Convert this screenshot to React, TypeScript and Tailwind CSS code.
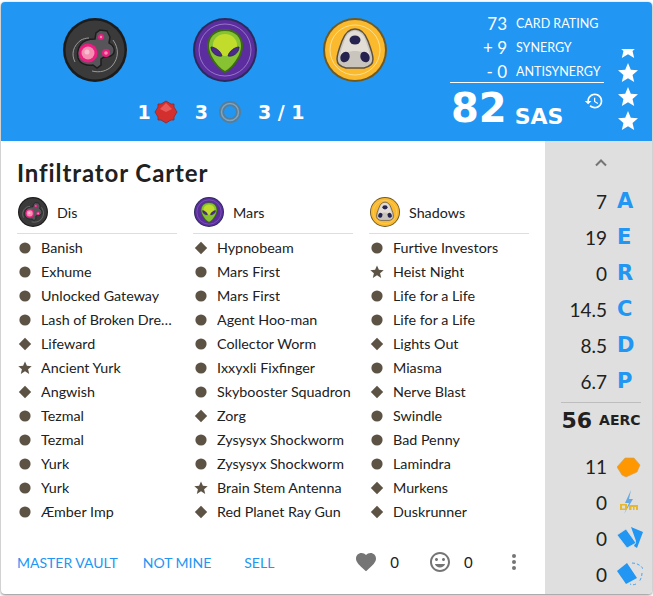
import React from 'react';

const display = 'font-["DejaVu_Sans",sans-serif] font-bold';

const decks = [
  {
    name: 'Dis',
    icon: 'dis',
    cards: [
      ['Banish', 'c'], ['Exhume', 'c'], ['Unlocked Gateway', 'c'], ['Lash of Broken Dreams', 'c'],
      ['Lifeward', 'd'], ['Ancient Yurk', 's'], ['Angwish', 'd'], ['Tezmal', 'c'],
      ['Tezmal', 'c'], ['Yurk', 'c'], ['Yurk', 'c'], ['Æmber Imp', 'c'],
    ],
  },
  {
    name: 'Mars',
    icon: 'mars',
    cards: [
      ['Hypnobeam', 'd'], ['Mars First', 'c'], ['Mars First', 'c'], ['Agent Hoo-man', 'c'],
      ['Collector Worm', 'c'], ['Ixxyxli Fixfinger', 'c'], ['Skybooster Squadron', 'c'], ['Zorg', 'd'],
      ['Zysysyx Shockworm', 'c'], ['Zysysyx Shockworm', 'c'], ['Brain Stem Antenna', 's'], ['Red Planet Ray Gun', 'd'],
    ],
  },
  {
    name: 'Shadows',
    icon: 'shadows',
    cards: [
      ['Furtive Investors', 'c'], ['Heist Night', 's'], ['Life for a Life', 'c'], ['Life for a Life', 'c'],
      ['Lights Out', 'd'], ['Miasma', 'c'], ['Nerve Blast', 'd'], ['Swindle', 'c'],
      ['Bad Penny', 'c'], ['Lamindra', 'c'], ['Murkens', 'd'], ['Duskrunner', 'd'],
    ],
  },
];

const stats = [
  ['7', 'A'], ['19', 'E'], ['0', 'R'], ['14.5', 'C'], ['8.5', 'D'], ['6.7', 'P'],
];

const STAR = 'M12 17.27L18.18 21l-1.64-7.03L22 9.24l-7.19-.61L12 2 9.19 8.63 2 9.24l5.46 4.73L5.82 21z';

function HouseIcon({ house, className }: { house: string; className: string }) {
  if (house === 'dis') {
    return (
      <svg viewBox="0 0 64 64" className={className}>
        <circle cx="32" cy="32" r="32" fill="#1c1c1c" />
        <circle cx="32" cy="32" r="29.5" fill="#3a3a3a" />
        <path d="M18 26c3-4 10-5 14-5l1-6 4-3 7 1 3 6-1 6 3 2c3 3 3 8 0 10-2 2-5 2-8 2l-3 2 0 6-4 3-4-3c-6 1-13-1-15-7-1-5 0-10 3-14z" fill="#57545a" stroke="#1d1d1d" strokeWidth="1.5" />
        <path d="M50 22c6 8 6 18-1 26-5 5-12 7-20 5" fill="none" stroke="#999" strokeWidth="1" />
        <path d="M12 44c-4-8-2-16 6-22 2-1 5-2 8-2" fill="none" stroke="#999" strokeWidth="1" />
        <circle cx="25" cy="35" r="9.5" fill="#e91e80" />
        <circle cx="25" cy="35" r="6.5" fill="#f48fb1" />
        <circle cx="24" cy="34" r="2.5" fill="#f8bbd0" />
        <circle cx="43" cy="35" r="4" fill="#e91e80" />
        <circle cx="43" cy="35" r="1.8" fill="#f48fb1" />
        <circle cx="38" cy="19" r="3" fill="#e91e80" />
        <circle cx="38" cy="19" r="1.2" fill="#f48fb1" />
      </svg>
    );
  }
  if (house === 'mars') {
    return (
      <svg viewBox="0 0 64 64" className={className}>
        <circle cx="32" cy="32" r="32" fill="#2c2a5c" />
        <circle cx="32" cy="32" r="30" fill="#5b2d9e" />
        <circle cx="32" cy="32" r="26" fill="none" stroke="#a58ad0" strokeWidth="0.8" />
        <path d="M32 11c-12 0-18 8-18 17 0 11 11 24 18 27 7-3 18-16 18-27 0-9-6-17-18-17z" fill="#3c6b10" />
        <path d="M32 13c-11 0-16 7-16 15 0 10 10 22 16 25 6-3 16-15 16-25 0-8-5-15-16-15z" fill="#86c232" />
        <ellipse cx="32" cy="27" rx="12" ry="11" fill="#c2dc2c" />
        <path d="M18 29c4 0 10 4 11 9-5 1-11-3-11-9zM46 29c-4 0-10 4-11 9 5 1 11-3 11-9z" fill="#4b2a8c" stroke="#2e1a5c" strokeWidth="0.8" />
      </svg>
    );
  }
  return (
    <svg viewBox="0 0 64 64" className={className}>
      <circle cx="32" cy="32" r="32" fill="#6f5a24" />
      <circle cx="32" cy="32" r="30" fill="#fbb92e" />
      <circle cx="32" cy="32" r="25" fill="none" stroke="#fde9a8" strokeWidth="0.8" />
      <path d="M32 11c6 0 10 4 13 12 3 8 5 13 5 18 0 6-4 8-9 9H23c-5-1-9-3-9-9 0-5 2-10 5-18 3-8 7-12 13-12z" fill="#c9c4bc" stroke="#5d5241" strokeWidth="1.5" />
      <path d="M32 13c5 0 9 4 11 11 2 6 4 10 4 15-6-8-24-8-30 0 0-5 2-9 4-15 2-7 6-11 11-11z" fill="#e2ded6" />
      <ellipse cx="32" cy="22" rx="5.5" ry="4.5" fill="#27234f" />
      <ellipse cx="22" cy="39" rx="4.5" ry="5.5" fill="#27234f" transform="rotate(25 22 39)" />
      <ellipse cx="42" cy="39" rx="4.5" ry="5.5" fill="#27234f" transform="rotate(-25 42 39)" />
    </svg>
  );
}

function Rarity({ kind }: { kind: string }) {
  return (
    <svg viewBox="0 0 16 16" className="w-4 h-4 shrink-0">
      {kind === 'c' && <circle cx="8" cy="8" r="5.6" fill="#5c5345" />}
      {kind === 'd' && <path d="M8 1.8 14.2 8 8 14.2 1.8 8z" fill="#5c5345" />}
      {kind === 's' && <path d="M8 1.4l1.9 4.4 4.8.4-3.6 3.1 1.1 4.7L8 11.3l-4.2 2.7 1.1-4.7L1.3 6.2l4.8-.4z" fill="#5c5345" />}
    </svg>
  );
}

function StarIcon() {
  return (
    <svg viewBox="0 0 24 24" className="w-6 h-6 shrink-0" fill="#fff">
      <path d={STAR} />
    </svg>
  );
}

function RatingRow({ value, label }: { value: string; label: string }) {
  return (
    <div className="flex items-center h-6 whitespace-nowrap">
      <span className="w-[57px] shrink-0 text-right text-[17px] text-white">{value}</span>
      <span className="ml-[9px] text-[12.5px] text-white">{label}</span>
    </div>
  );
}

function SideRow({ value, children, className }: { value: string; children: React.ReactNode; className: string }) {
  return (
    <div className={`flex items-center justify-end pr-[9px] ${className}`}>
      <span className="text-[19px] text-[#212121]">{value}</span>
      <span className="w-[26px] h-[26px] ml-[10px] flex items-center">{children}</span>
    </div>
  );
}

export default function App() {
  return (
    <div className='w-[653px] h-[596px] pt-[2px] px-[1px] bg-white font-["Lato",sans-serif]'>
      <div className="w-[651px] h-[592px] rounded overflow-hidden flex flex-col bg-white shadow-[0_1px_3px_rgba(0,0,0,0.5)]">
        {/* Header */}
        <div className="h-[139px] shrink-0 bg-[#2196f3] flex">
          <div className="w-[449px] shrink-0 flex flex-col items-center pt-4">
            <div className="flex gap-[66px] ml-[-2px]">
              <HouseIcon house="dis" className="w-16 h-16" />
              <HouseIcon house="mars" className="w-16 h-16" />
              <HouseIcon house="shadows" className="w-16 h-16" />
            </div>
            <div className={`mt-[16px] mr-[9px] h-[28px] flex items-center text-white text-[19px] ${display}`}>
              <span>1</span>
              <svg viewBox="0 0 24 24" className="w-6 h-6 ml-[3px]">
                <path d="M12 1l5 3 3 0 0 3 3 5-3 5 0 3-3 0-5 3-5-3-3 0 0-3-3-5 3-5 0-3 3 0z" fill="#d32f2f" stroke="#8e2a2a" strokeWidth="0.8" />
                <path d="M12 3l6 6-6 3-6-3z" fill="#e85a5a" />
              </svg>
              <span className="ml-[17px]">3</span>
              <svg viewBox="0 0 24 24" className="w-6 h-6 ml-[10px]">
                <circle cx="12" cy="12" r="8.5" fill="none" stroke="#5a7d96" strokeWidth="5" />
                <circle cx="12" cy="12" r="8.5" fill="none" stroke="#7aa5c4" strokeWidth="1.5" />
              </svg>
              <span className="ml-[16px]">3 / 1</span>
            </div>
          </div>
          <div className="w-[154px] shrink-0 pt-[10px]">
            <RatingRow value="73" label="CARD RATING" />
            <RatingRow value="+ 9" label="SYNERGY" />
            <RatingRow value="- 0" label="ANTISYNERGY" />
            <div className="border-t border-white mt-[-2px] flex items-end pt-[2px] relative">
              <span className={`ml-[1px] text-[40px] leading-[46px] text-white ${display}`}>82</span>
              <span className={`ml-[8px] mb-[2px] text-[22px] leading-6 text-white ${display}`}>SAS</span>
              <svg viewBox="0 0 24 24" className="w-5 h-5 absolute right-0 top-[8px]" fill="#fff">
                <path d="M13 3c-4.97 0-9 4.03-9 9H1l3.89 3.89.07.14L9 12H6c0-3.87 3.13-7 7-7s7 3.13 7 7-3.13 7-7 7c-1.93 0-3.68-.79-4.94-2.06l-1.42 1.42C8.27 19.99 10.51 21 13 21c4.97 0 9-4.03 9-9s-4.03-9-9-9zm-1 5v5l4.28 2.54.72-1.21-3.5-2.08V8H12z" />
              </svg>
            </div>
          </div>
          <div className="flex-1 flex flex-col items-center justify-end overflow-hidden pb-2">
            <div className="h-3 overflow-hidden flex items-end"><StarIcon /></div>
            <StarIcon />
            <StarIcon />
            <StarIcon />
          </div>
        </div>

        {/* Body */}
        <div className="flex-1 flex min-h-0">
          <div className="w-[544px] shrink-0 flex flex-col pl-4">
            <h1 className="mt-[16px] text-[24px] leading-8 font-bold text-[#212121] tracking-[0.9px]">
              Infiltrator Carter
            </h1>
            <div className="mt-[8px] flex gap-4">
              {decks.map((deck) => (
                <div key={deck.name} className="w-40">
                  <div className="h-[37px] flex items-center border-b border-[#dedede] pb-[6px]">
                    <HouseIcon house={deck.icon} className="w-[30px] h-[30px] ml-[1px]" />
                    <span className="ml-[9px] mt-[1px] text-[14.3px] text-[#212121]">{deck.name}</span>
                  </div>
                  <div className="mt-[2px]">
                    {deck.cards.map(([name, rarity], i) => (
                      <div key={i} className="h-6 flex items-center">
                        <Rarity kind={rarity} />
                        <span className="ml-2 truncate text-[14.3px] text-[#212121]">{name}</span>
                      </div>
                    ))}
                  </div>
                </div>
              ))}
            </div>
            <div className="mt-[20px] flex items-center h-9 text-[14px]">
              <span className="text-[#2196f3]">MASTER VAULT</span>
              <span className="ml-[25px] text-[#2196f3]">NOT MINE</span>
              <span className="ml-[33px] text-[#2196f3]">SELL</span>
              <svg viewBox="0 0 24 24" className="w-6 h-6 ml-[80px]" fill="#757575">
                <path d="M12 21.35l-1.45-1.32C5.4 15.36 2 12.28 2 8.5 2 5.42 4.42 3 7.5 3c1.74 0 3.41.81 4.5 2.09C13.09 3.81 14.76 3 16.5 3 19.58 3 22 5.42 22 8.5c0 3.78-3.4 6.86-8.55 11.54L12 21.35z" />
              </svg>
              <span className="ml-[12px] text-[15px] text-[#212121]">0</span>
              <svg viewBox="0 0 24 24" className="w-6 h-6 ml-[29px]" fill="#757575">
                <path d="M11.99 2C6.47 2 2 6.48 2 12s4.47 10 9.99 10C17.52 22 22 17.52 22 12S17.52 2 11.99 2zM12 20c-4.42 0-8-3.58-8-8s3.58-8 8-8 8 3.58 8 8-3.58 8-8 8zm3.5-9c.83 0 1.5-.67 1.5-1.5S16.33 8 15.5 8 14 8.67 14 9.5s.67 1.5 1.5 1.5zm-7 0c.83 0 1.5-.67 1.5-1.5S9.33 8 8.5 8 7 8.67 7 9.5 7.67 11 8.5 11zm3.5 6.5c2.33 0 4.31-1.46 5.11-3.5H6.89c.8 2.04 2.78 3.5 5.11 3.5z" />
              </svg>
              <span className="ml-[12px] text-[15px] text-[#212121]">0</span>
              <svg viewBox="0 0 24 24" className="w-6 h-6 ml-[29px]" fill="#757575">
                <circle cx="12" cy="6" r="2" />
                <circle cx="12" cy="12" r="2" />
                <circle cx="12" cy="18" r="2" />
              </svg>
            </div>
          </div>

          {/* Side stats */}
          <div className="flex-1 bg-[#dfdfdf] flex flex-col">
            <div className="h-[43px] flex items-center justify-center pl-[5px]">
              <svg viewBox="0 0 24 24" className="w-5 h-5" fill="none" stroke="#757575" strokeWidth="2.4">
                <path d="M6 15l6-6 6 6" />
              </svg>
            </div>
            {stats.map(([value, letter]) => (
              <SideRow key={letter} value={value} className="h-9">
                <span className={`text-[21px] text-[#2196f3] ${display}`}>{letter}</span>
              </SideRow>
            ))}
            <div className="ml-[16px] mr-[11px] mt-[2px] border-t border-[#bdbdbd] flex items-center justify-center h-9 gap-[7px]">
              <span className={`text-[22px] text-[#212121] ${display}`}>56</span>
              <span className={`text-[14px] text-[#212121] ${display}`}>AERC</span>
            </div>
            <div className="h-[11px]" />
            <SideRow value="11" className="h-9">
              <svg viewBox="0 0 26 26" className="w-[26px] h-[26px]">
                <path d="M0 13 8 4H17L23 11 20 18 9 23 5 21Z" fill="#ff9800" stroke="#c9a263" strokeWidth="0.6" />
              </svg>
            </SideRow>
            <SideRow value="0" className="h-9">
              <svg viewBox="0 0 26 26" className="w-[26px] h-[26px]">
                <path d="M14 0 8 13h4L7 24 16 9h-4z" fill="#64a9e6" />
                <path d="M3 14h7v6H3zM5 15.500v3h3v-3zM12 15h9v5h-2v-3h-1.500v3H16v-3h-1.500v3H12z" fill="#e6b82e" fillRule="evenodd" />
              </svg>
            </SideRow>
            <SideRow value="0" className="h-9">
              <svg viewBox="0 0 26 26" className="w-[26px] h-[26px]">
                <path d="M14 1 26 6 20 22 17 20 19 15z" fill="#2196f3" />
                <path d="M0 9 9 3 19 17 10 22z" fill="#2196f3" stroke="#dfdfdf" strokeWidth="0.8" />
              </svg>
            </SideRow>
            <SideRow value="0" className="h-9">
              <svg viewBox="0 0 26 26" className="w-[26px] h-[26px]">
                <path d="M0 9 10 1 20 16 9 22z" fill="#2196f3" />
                <path d="M15 1c5 0 10 3 11 6M25 11c0 3-1 6-3 9M19 22c-2 1-4 1-6 0" fill="none" stroke="#2196f3" strokeWidth="0.8" strokeDasharray="3 2" />
              </svg>
            </SideRow>
          </div>
        </div>
      </div>
    </div>
  );
}
